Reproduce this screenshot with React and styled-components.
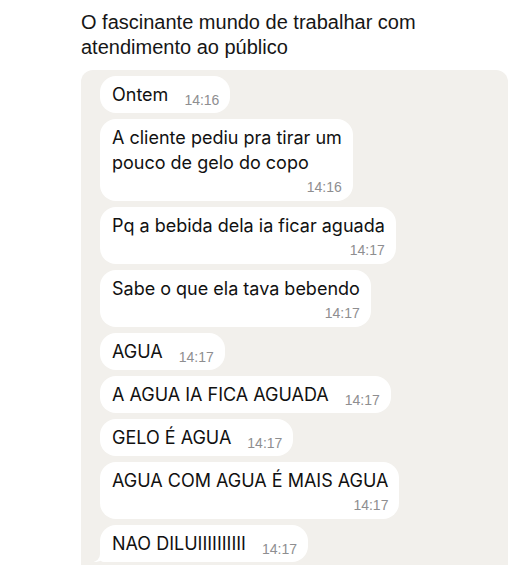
import React from "react"
import styled, { createGlobalStyle } from "styled-components"

const messages = [
  { text: "Ontem", time: "14:16" },
  { text: "A cliente pediu pra tirar um\npouco de gelo do copo", time: "14:16", stacked: true },
  { text: "Pq a bebida dela ia ficar aguada", time: "14:17", stacked: true },
  { text: "Sabe o que ela tava bebendo", time: "14:17", stacked: true },
  { text: "AGUA", time: "14:17" },
  { text: "A AGUA IA FICA AGUADA", time: "14:17" },
  { text: "GELO É AGUA", time: "14:17" },
  { text: "AGUA COM AGUA É MAIS AGUA", time: "14:17", stacked: true },
  { text: "NAO DILUIIIIIIIIII", time: "14:17", tail: true },
]

const App = () => {
  return (
    <Page>
      <GlobalStyle />
      <Title>
        O fascinante mundo de trabalhar com
        <br />
        atendimento ao público
      </Title>
      <Chat>
        {messages.map((m, i) => (
          <Bubble key={i} $stacked={m.stacked} $tail={m.tail}>
            <Text>{m.text}</Text>
            <Time $stacked={m.stacked}>{m.time}</Time>
          </Bubble>
        ))}
      </Chat>
    </Page>
  )
}

export default App

const GlobalStyle = createGlobalStyle`
  html, body {
    margin: 0;
    background: #fff;
    overflow: hidden;
  }
  body {
    font-family: "Liberation Sans", Arial, sans-serif;
    color: #111;
  }
`

const Page = styled.div`
  width: 520px;
  height: 565px;
  padding: 10px 12px 0 81px;
  box-sizing: border-box;
  display: flex;
  flex-direction: column;
  gap: 10px;
`

const Title = styled.h1`
  margin: 0;
  font-size: 20px;
  line-height: 25px;
  font-weight: 400;
  color: #161616;
`

const Chat = styled.div`
  background: #f2f0ec;
  border-radius: 12px 12px 0 0;
  padding: 6px 19px 20px 19px;
  display: flex;
  flex-direction: column;
  align-items: flex-start;
  gap: 6px;
  flex: 1;
`

const Bubble = styled.div`
  position: relative;
  background: #fff;
  border-radius: 16px;
  padding: 6px 11px 6px 12px;
  display: flex;
  flex-direction: ${(p) => (p.$stacked ? "column" : "row")};
  align-items: flex-end;
  gap: ${(p) => (p.$stacked ? "3px" : "16px")};
  padding-bottom: ${(p) => (p.$stacked ? "5px" : "6px")};

  ${(p) =>
    p.$tail &&
    `
    border-bottom-left-radius: 4px;
    &::before {
      content: "";
      position: absolute;
      left: -6px;
      bottom: 0;
      width: 12px;
      height: 12px;
      background: #fff;
      border-bottom-right-radius: 10px;
    }
    &::after {
      content: "";
      position: absolute;
      left: -10px;
      bottom: 0;
      width: 10px;
      height: 14px;
      background: #f2f0ec;
      border-bottom-right-radius: 8px;
    }
  `}
`

const Text = styled.div`
  align-self: flex-start;
  font-family: Inter, "Liberation Sans", sans-serif;
  font-size: 18px;
  line-height: 25px;
  white-space: pre-line;
  color: #111;
`

const Time = styled.span`
  font-size: 14px;
  line-height: 18px;
  color: #8e8e90;
  margin-bottom: ${(p) => (p.$stacked ? "0" : "-2px")};
`
